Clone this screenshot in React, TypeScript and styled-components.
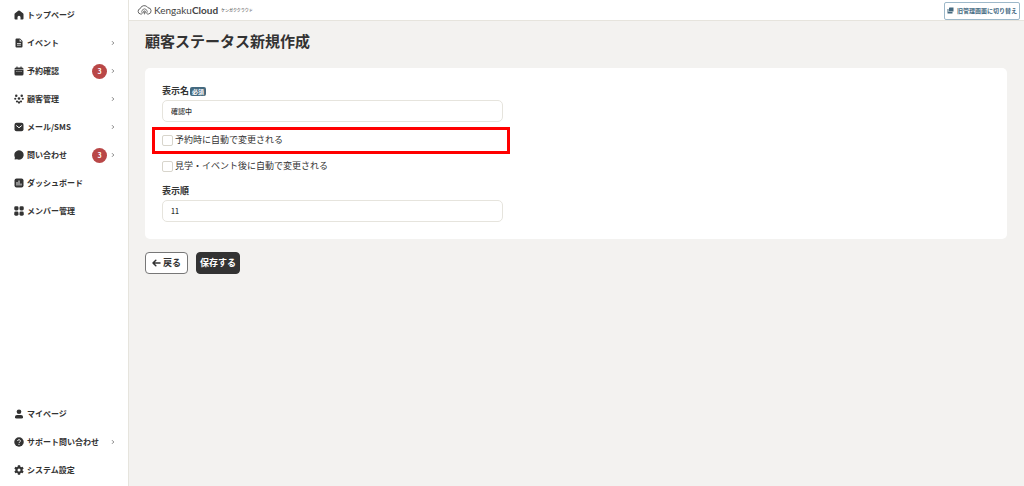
import React from "react";
import styled, { createGlobalStyle, css } from "styled-components";

const ink = "#333333";
const canvas = "#f3f2f0";
const line = "#e6e4dd";
const blue = "#44697f";

const GlobalStyle = createGlobalStyle`
  *, *::before, *::after { box-sizing: border-box; }
  body {
    margin: 0;
    background: ${canvas};
    color: ${ink};
    font-family: "Noto Sans CJK JP", "Noto Sans", sans-serif;
    font-size: 9px;
    line-height: 12px;
  }
  button, input { font: inherit; color: inherit; }
`;

const Shell = styled.div`
  display: flex;
  min-height: 100vh;
`;

const Sidebar = styled.nav`
  display: flex;
  flex-direction: column;
  justify-content: space-between;
  flex: 0 0 129px;
  padding: 1px 0 2px;
  background: #ffffff;
  border-right: 1px solid ${line};
`;

const MenuList = styled.ul`
  margin: 0;
  padding: 0;
  list-style: none;
`;

const MenuLink = styled.a`
  display: flex;
  align-items: center;
  height: 28px;
  padding: 0 13px 0 14px;
  color: ${ink};
  font-size: 8px;
  font-weight: 700;
  text-decoration: none;
  white-space: nowrap;
`;

const MenuIcon = styled.svg`
  flex: none;
  width: 10px;
  height: 10px;
  margin-right: 3px;
  fill: currentColor;
`;

const MenuText = styled.span`
  flex: 1;
`;

const CountBadge = styled.span`
  width: 15px;
  height: 15px;
  margin-right: 4px;
  border-radius: 50%;
  background: #b94747;
  color: #ffffff;
  font-size: 7px;
  line-height: 15px;
  text-align: center;
`;

const Chevron = styled.svg`
  flex: none;
  width: 4px;
  height: 6px;
  fill: none;
  stroke: #666666;
  stroke-width: 0.8;
`;

const Content = styled.div`
  flex: 1;
  min-width: 0;
`;

const Header = styled.header`
  display: flex;
  align-items: center;
  justify-content: space-between;
  height: 21px;
  padding: 0 4px 0 8px;
  background: #ffffff;
  border-bottom: 1px solid ${line};
`;

const Brand = styled.a`
  display: flex;
  align-items: center;
  color: #444444;
  font-family: Lato, sans-serif;
  font-size: 10px;
  text-decoration: none;
  white-space: nowrap;
`;

const BrandMark = styled.svg`
  width: 15px;
  height: 10px;
  margin-right: 2px;
  fill: none;
  stroke: #555555;
  stroke-linecap: round;
`;

const BrandStrong = styled.strong`
  font-weight: 700;
`;

const BrandKana = styled.span`
  margin-left: 3px;
  color: #666666;
  font-family: "Noto Sans CJK JP", sans-serif;
  font-size: 4px;
  font-weight: 500;
`;

const SwitchButton = styled.button`
  display: flex;
  align-items: center;
  gap: 3px;
  height: 18px;
  margin-top: 1px;
  padding: 0 2px;
  border: 1px solid #9db8c9;
  border-radius: 2px;
  background: #ffffff;
  color: ${blue};
  font-size: 6px;
  font-weight: 700;
  white-space: nowrap;
`;

const SwitchIcon = styled.svg`
  width: 7px;
  height: 7px;
  fill: currentColor;
`;

const Main = styled.main`
  padding: 8px 17px 16px 16px;
`;

const PageTitle = styled.h1`
  margin: 0 0 15px;
  font-size: 15px;
  font-weight: 700;
  line-height: 24px;
`;

const Card = styled.section`
  padding: 17px;
  border-radius: 5px;
  background: #ffffff;
`;

const Fields = styled.div`
  display: flex;
  flex-direction: column;
  max-width: 341px;
`;

const FieldLabel = styled.label`
  display: flex;
  align-items: center;
  gap: 1px;
  height: 12px;
  margin-bottom: 3px;
  font-weight: 700;
`;

const RequiredTag = styled.span`
  padding: 0 2px;
  border-radius: 2px;
  background: ${blue};
  color: #ffffff;
  font-size: 6px;
  line-height: 9px;
`;

const TextInput = styled.input`
  width: 100%;
  height: 22px;
  padding: 0 8px;
  border: 1px solid ${line};
  border-radius: 5px;
  background: #ffffff;
  font-size: 7px;
  font-weight: 500;
`;

const CheckRow = styled.label<{ $marked?: boolean }>`
  position: relative;
  display: flex;
  align-items: center;
  gap: 2px;
  height: 26px;
  ${({ $marked }) =>
    $marked &&
    css`
      &::after {
        content: "";
        position: absolute;
        inset: 0 -7px -1px -10px;
        border: 3px solid #ff0000;
        pointer-events: none;
      }
    `}
`;

const CheckGroup = styled.div`
  padding: 5px 0 6px;
`;

const CheckBox = styled.input`
  appearance: none;
  width: 11px;
  height: 11px;
  margin: 0;
  border: 1px solid #d8d5cc;
  border-radius: 2px;
  background: #ffffff;
  &:checked { background: ${ink}; }
`;

const Actions = styled.div`
  display: flex;
  gap: 8px;
  margin-top: 13px;
`;

const ActionButton = styled.button<{ $primary?: boolean }>`
  display: flex;
  align-items: center;
  justify-content: center;
  gap: 2px;
  min-width: 43px;
  height: 22px;
  padding: 0 3px;
  border: 1px solid ${({ $primary }) => ($primary ? ink : "#777777")};
  border-radius: 4px;
  background: ${({ $primary }) => ($primary ? ink : "#ffffff")};
  color: ${({ $primary }) => ($primary ? "#ffffff" : ink)};
  font-weight: 700;
`;

const ArrowIcon = styled.svg`
  width: 9px;
  height: 8px;
  fill: none;
  stroke: currentColor;
  stroke-width: 1.5;
  stroke-linecap: round;
  stroke-linejoin: round;
`;

const icons: Record<string, React.ReactNode> = {
  home: <path d="M8.500 1.300q1.500-1 3 0L18 6.500q1 .9 1 2.200V17q0 2-2 2H13v-4.500a3 3 0 0 0-6 0V19H3q-2 0-2-2V8.700q0-1.300 1-2.200Z" />,
  file: (
    <path
      fillRule="evenodd"
      d="M5 1h7l5 5v11q0 2-2 2H5q-2 0-2-2V3q0-2 2-2ZM11.200 2.500V7h4.500ZM6 10v1.400h8V10ZM6 13.500v1.400h8v-1.400Z"
    />
  ),
  calendar: (
    <path
      fillRule="evenodd"
      d="M5 1h2v2h6V1h2v2h1q3 0 3 3v.8H1V6q0-3 3-3h1ZM1 8h18v8q0 3-3 3H4q-3 0-3-3ZM5 10.500v1.600h1.800v-1.600ZM9.100 10.500v1.600h1.800v-1.600ZM13.200 10.500v1.600H15v-1.600Z"
    />
  ),
  people: (
    <>
      <circle cx="4.500" cy="3.500" r="2.500" />
      <circle cx="15.500" cy="3.500" r="2.500" />
      <circle cx="10" cy="9" r="2.600" />
      <circle cx="2.500" cy="9.500" r="2.200" />
      <circle cx="17.500" cy="9.500" r="2.200" />
      <circle cx="6" cy="15" r="2.200" />
      <circle cx="14" cy="15" r="2.200" />
      <circle cx="10" cy="17" r="2.300" />
    </>
  ),
  mail: (
    <>
      <rect x="1" y="1.500" width="18" height="17" rx="4" />
      <path d="m4.500 7 5.500 4.500L15.500 7" fill="none" stroke="#ffffff" strokeWidth="2" />
    </>
  ),
  chat: <path d="M10 .7a9.300 9.300 0 1 1-4 17.700L1.200 19 1.800 14.500A9.300 9.300 0 0 1 10 .7Z" />,
  chart: (
    <>
      <rect x="1" y="1" width="18" height="18" rx="4" />
      <path d="M6 8v7M10 5v10M14 11v4" fill="none" stroke="#ffffff" strokeWidth="1.800" />
    </>
  ),
  grid: (
    <>
      <rect x="0.500" y="0.500" width="8.500" height="8.500" rx="2.800" />
      <rect x="11" y="0.500" width="8.500" height="8.500" rx="2.800" />
      <rect x="0.500" y="11" width="8.500" height="8.500" rx="2.800" />
      <rect x="11" y="11" width="8.500" height="8.500" rx="2.800" />
    </>
  ),
  user: (
    <>
      <circle cx="10" cy="5.500" r="4.700" />
      <path d="M2 15.500q0-3.500 4-3.500h8q4 0 4 3.500v1q0 2.500-3 2.500H5q-3 0-3-2.500Z" />
    </>
  ),
  help: (
    <>
      <circle cx="10" cy="10" r="9.500" />
      <path d="M7.300 8a2.700 2.700 0 1 1 3.900 2.400Q10 11 10 12.300" fill="none" stroke="#ffffff" strokeWidth="1.900" />
      <circle cx="10" cy="15" r="1.200" fill="#ffffff" />
    </>
  ),
  gear: (
    <path
      fillRule="evenodd"
      d="M7.800.5h4.400l.6 2.900 1.500.9 2.800-1 2.200 3.800L17.100 9v2l2.200 1.900-2.200 3.800-2.800-1-1.500.9-.6 2.900H7.800l-.6-2.900-1.500-.9-2.800 1L.7 12.900 2.900 11V9L.7 7.100l2.200-3.800 2.800 1 1.500-.9ZM10 7a3 3 0 1 0 0 6 3 3 0 0 0 0-6Z"
    />
  ),
};

type Item = { icon: string; label: string; count?: number; expandable?: boolean };

const primaryItems: Item[] = [
  { icon: "home", label: "トップページ" },
  { icon: "file", label: "イベント", expandable: true },
  { icon: "calendar", label: "予約確認", count: 3, expandable: true },
  { icon: "people", label: "顧客管理", expandable: true },
  { icon: "mail", label: "メール/SMS", expandable: true },
  { icon: "chat", label: "問い合わせ", count: 3, expandable: true },
  { icon: "chart", label: "ダッシュボード" },
  { icon: "grid", label: "メンバー管理" },
];

const secondaryItems: Item[] = [
  { icon: "user", label: "マイページ" },
  { icon: "help", label: "サポート問い合わせ", expandable: true },
  { icon: "gear", label: "システム設定" },
];

function Menu({ items }: { items: Item[] }) {
  return (
    <MenuList>
      {items.map((item) => (
        <li key={item.label}>
          <MenuLink href="#">
            <MenuIcon viewBox="0 0 20 20" aria-hidden="true">
              {icons[item.icon]}
            </MenuIcon>
            <MenuText>{item.label}</MenuText>
            {item.count && <CountBadge>{item.count}</CountBadge>}
            {item.expandable && (
              <Chevron viewBox="0 0 4 6" aria-hidden="true">
                <path d="m1 1.200 1.800 1.800L1 4.800" />
              </Chevron>
            )}
          </MenuLink>
        </li>
      ))}
    </MenuList>
  );
}

export default function App() {
  return (
    <>
      <GlobalStyle />
      <Shell>
        <Sidebar>
          <Menu items={primaryItems} />
          <Menu items={secondaryItems} />
        </Sidebar>
        <Content>
          <Header>
            <Brand href="#">
              <BrandMark viewBox="0 0 30 20" aria-hidden="true">
                <path
                  d="M9 18H7A5.500 5.500 0 0 1 6.500 7.200 8.500 8.500 0 0 1 22 5.500 6.300 6.300 0 0 1 23 18H21"
                  strokeWidth="1.800"
                />
                <path d="M10.500 16.500a5.500 5.500 0 1 1 9 0M13 16a2.600 2.600 0 1 1 4 0M15 13.500V18" strokeWidth="1.500" />
              </BrandMark>
              <span>
                Kengaku<BrandStrong>Cloud</BrandStrong>
              </span>
              <BrandKana>ケンガククラウド</BrandKana>
            </Brand>
            <SwitchButton type="button">
              <SwitchIcon viewBox="0 0 14 14" aria-hidden="true">
                <path d="M5 1h8v8H4V2Z" />
                <path d="M1 4h2v6h8v3H1Z" />
              </SwitchIcon>
              旧管理画面に切り替え
            </SwitchButton>
          </Header>
          <Main>
            <PageTitle>顧客ステータス新規作成</PageTitle>
            <Card>
              <Fields>
                <FieldLabel htmlFor="display-name">
                  表示名<RequiredTag>必須</RequiredTag>
                </FieldLabel>
                <TextInput id="display-name" type="text" defaultValue="確認中" />
                <CheckGroup>
                  <CheckRow $marked>
                    <CheckBox type="checkbox" />
                    予約時に自動で変更される
                  </CheckRow>
                  <CheckRow>
                    <CheckBox type="checkbox" />
                    見学・イベント後に自動で変更される
                  </CheckRow>
                </CheckGroup>
                <FieldLabel htmlFor="display-order">表示順</FieldLabel>
                <TextInput id="display-order" type="text" defaultValue="11" />
              </Fields>
            </Card>
            <Actions>
              <ActionButton type="button">
                <ArrowIcon viewBox="0 0 9 8" aria-hidden="true">
                  <path d="M8 4H1M3.800 1.200 1 4l2.800 2.800" />
                </ArrowIcon>
                戻る
              </ActionButton>
              <ActionButton type="button" $primary>
                保存する
              </ActionButton>
            </Actions>
          </Main>
        </Content>
      </Shell>
    </>
  );
}
